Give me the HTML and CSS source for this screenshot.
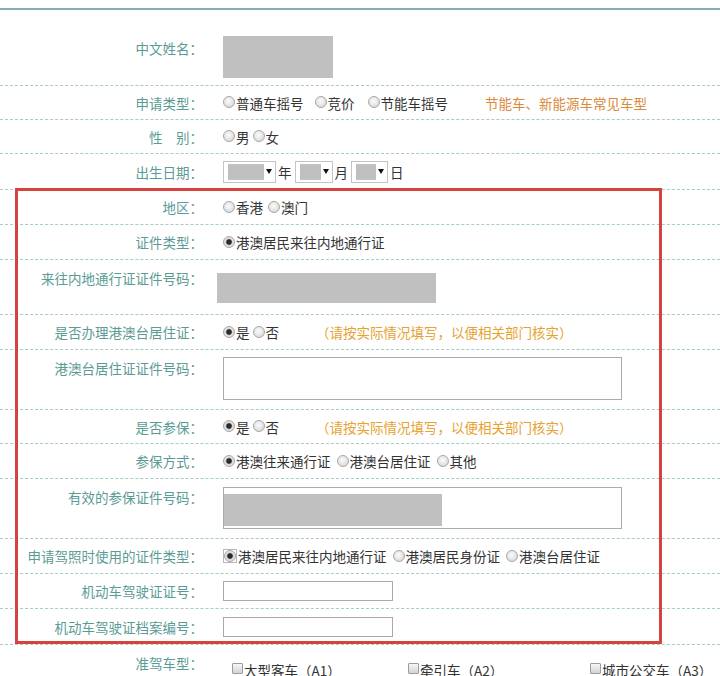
FILE: index.html
```html
<!DOCTYPE html>
<html lang="zh-CN">
<head>
<meta charset="utf-8">
<title>申请表</title>
<link rel="stylesheet" href="styles.css">
</head>
<body>
<div class="form">
  <div class="row r-name">
    <div class="lbl">中文姓名：</div>
    <div class="val"><div class="blk blk-name"></div></div>
  </div>
  <div class="row h34">
    <div class="lbl">申请类型：</div>
    <div class="val">
      <label class="opt m12"><input type="radio" name="t">普通车摇号</label>
      <label class="opt m13"><input type="radio" name="t">竞价</label>
      <label class="opt"><input type="radio" name="t">节能车摇号</label>
      <span class="note note-o">节能车、新能源车常见车型</span>
    </div>
  </div>
  <div class="row h34">
    <div class="lbl">性　别：</div>
    <div class="val">
      <label class="opt m3"><input type="radio" name="s">男</label>
      <label class="opt"><input type="radio" name="s">女</label>
    </div>
  </div>
  <div class="row h36">
    <div class="lbl">出生日期：</div>
    <div class="val">
      <span class="sel"><span class="g g1"></span><span class="arr"></span></span><span class="unit">年</span>
      <span class="sel"><span class="g g2"></span><span class="arr"></span></span><span class="unit">月</span>
      <span class="sel"><span class="g g3"></span><span class="arr"></span></span><span class="unit">日</span>
    </div>
  </div>
  <div class="row">
    <div class="lbl">地区：</div>
    <div class="val">
      <label class="opt"><input type="radio" name="a">香港</label>
      <label class="opt"><input type="radio" name="a">澳门</label>
    </div>
  </div>
  <div class="row">
    <div class="lbl">证件类型：</div>
    <div class="val">
      <label class="opt"><input type="radio" name="c" checked>港澳居民来往内地通行证</label>
    </div>
  </div>
  <div class="row top h55">
    <div class="lbl">来往内地通行证证件号码：</div>
    <div class="val"><div class="blk blk-pass"></div></div>
  </div>
  <div class="row">
    <div class="lbl">是否办理港澳台居住证：</div>
    <div class="val">
      <label class="opt m3"><input type="radio" name="r" checked>是</label>
      <label class="opt"><input type="radio" name="r">否</label>
      <span class="note">（请按实际情况填写，以便相关部门核实）</span>
    </div>
  </div>
  <div class="row top h60">
    <div class="lbl">港澳台居住证证件号码：</div>
    <div class="val"><div class="ta ta1"></div></div>
  </div>
  <div class="row h34">
    <div class="lbl">是否参保：</div>
    <div class="val">
      <label class="opt m3"><input type="radio" name="i" checked>是</label>
      <label class="opt"><input type="radio" name="i">否</label>
      <span class="note">（请按实际情况填写，以便相关部门核实）</span>
    </div>
  </div>
  <div class="row">
    <div class="lbl">参保方式：</div>
    <div class="val">
      <label class="opt m6"><input type="radio" name="m" checked>港澳往来通行证</label>
      <label class="opt m6"><input type="radio" name="m">港澳台居住证</label>
      <label class="opt"><input type="radio" name="m">其他</label>
    </div>
  </div>
  <div class="row top h60">
    <div class="lbl">有效的参保证件号码：</div>
    <div class="val"><div class="ta ta2"><div class="blk blk-ins"></div></div></div>
  </div>
  <div class="row">
    <div class="lbl">申请驾照时使用的证件类型：</div>
    <div class="val">
      <label class="opt m6"><span class="ring"><input type="radio" name="d" checked></span>港澳居民来往内地通行证</label>
      <label class="opt m6"><input type="radio" name="d">港澳居民身份证</label>
      <label class="opt"><input type="radio" name="d">港澳台居住证</label>
    </div>
  </div>
  <div class="row">
    <div class="lbl">机动车驾驶证证号：</div>
    <div class="val"><div class="inp"></div></div>
  </div>
  <div class="row h36">
    <div class="lbl">机动车驾驶证档案编号：</div>
    <div class="val"><div class="inp"></div></div>
  </div>
  <div class="row top last">
    <div class="lbl">准驾车型：</div>
    <div class="val">
      <div class="chks">
        <label class="chk"><input type="checkbox">大型客车（A1）</label>
        <label class="chk"><input type="checkbox">牵引车（A2）</label>
        <label class="chk"><input type="checkbox">城市公交车（A3）</label>
      </div>
    </div>
  </div>
  <div class="hl"></div>
</div>
</body>
</html>
```

FILE: styles.css
```css
* { box-sizing: border-box; }
html, body { margin: 0; padding: 0; background: #fff; }
body {
  font-family: "Noto Sans CJK SC", "Microsoft YaHei", sans-serif;
  font-size: 13.5px;
  color: #333;
  overflow: hidden;
}
.form {
  position: relative;
  margin-top: 8px;
  border-top: 2px solid #87a9be;
}
.row {
  display: flex;
  align-items: center;
  height: 35px;
  border-bottom: 1px dashed #a6ccc7;
}
.row.h34 { height: 34px; }
.row.h36 { height: 36px; }
.row.h55 { height: 55px; }
.row.h60 { height: 60px; }
.row.r-name { height: 76px; align-items: flex-start; }
.row.r-name .lbl { padding-top: 28px; }
.row.top { align-items: flex-start; }
.row.top .lbl { padding-top: 8px; }
.row.last { height: 50px; border-bottom: none; }

.lbl {
  width: 203px;
  flex: none;
  text-align: right;
  color: #5b9b95;
  line-height: 20px;
  white-space: nowrap;
}
.val {
  margin-left: 20px;
  display: flex;
  align-items: center;
  white-space: nowrap;
  line-height: 20px;
}

.blk { background: #c0c0c0; }
.blk-name { width: 110px; height: 42px; margin-top: 26px; }
.blk-pass { width: 219px; height: 30px; margin-top: 13px; margin-left: -6px; }
.blk-ins { width: 218px; height: 32px; margin-top: 6px; }

.opt { display: inline-flex; align-items: center; margin-right: 5px; }
.opt.m3 { margin-right: 3px; }
.opt.m6 { margin-right: 6px; }
.opt.m12 { margin-right: 11px; }
.opt.m13 { margin-right: 13px; }
.opt input {
  -webkit-appearance: none;
  appearance: none;
  width: 12px;
  height: 12px;
  margin: 0 1px 1px 0;
  border: 1px solid #a8a8a8;
  border-radius: 50%;
  background: radial-gradient(circle at 45% 40%, #fbfbfb 0, #e4e4e4 55%, #cbcbcb 100%);
}
.opt input:checked {
  background: radial-gradient(circle, #2b2b2b 0, #2b2b2b 2.3px, #8e8e8e 2.9px, #e6e6e6 3.7px, #cdcdcd 100%);
}
.ring {
  display: inline-flex;
  border: 1px solid #b4b8be;
  margin-right: 1px;
}
.ring input { margin: 0; }

.note { color: #e6a232; margin-left: 32px; }
.note-o { color: #d98a3c; }

.sel {
  display: inline-flex;
  align-items: center;
  height: 22px;
  border: 1px solid #c4c4c4;
  padding: 2px 3px 2px 4px;
  background: #fff;
}
.sel .g { height: 100%; background: #c0c0c0; }
.sel .g1 { width: 36px; }
.sel .g2 { width: 21px; }
.sel .g3 { width: 20px; }
.sel .arr {
  width: 0;
  height: 0;
  margin-left: 2px;
  border-left: 3px solid transparent;
  border-right: 3px solid transparent;
  border-top: 5px solid #111;
}
.unit { margin: 0 3px 0 2px; }

.ta {
  width: 399px;
  border: 1px solid #acacac;
  background: #fff;
}
.ta1 { height: 43px; margin-top: 7px; }
.ta2 { height: 42px; margin-top: 8px; }

.inp {
  width: 170px;
  height: 20px;
  border: 1px solid #aaaaaa;
}

.chks {
  display: grid;
  grid-template-columns: 176px 182px auto;
  padding-left: 9px;
  margin-top: 15px;
}
.chk { display: inline-flex; align-items: center; }
.chk input {
  -webkit-appearance: none;
  appearance: none;
  width: 11px;
  height: 11px;
  margin: 0 1px 3px 0;
  border: 1px solid #9c9c9c;
  border-radius: 1px;
  background: linear-gradient(#f6f6f6, #d4d4d4);
}

.hl {
  position: absolute;
  left: 15px;
  top: 178px;
  width: 647px;
  height: 456px;
  border: 3px solid #d6423d;
  pointer-events: none;
}
```
